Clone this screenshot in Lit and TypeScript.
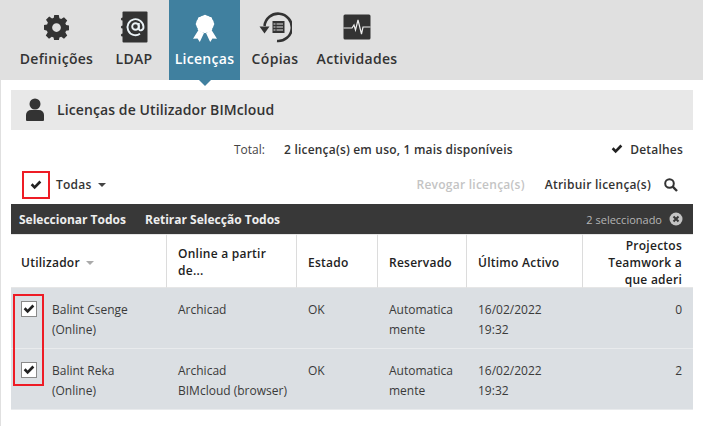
import { LitElement, html, css, svg } from "lit";
import { customElement } from "lit/decorators.js";

const check = (w: number) => html`<svg width=${w} height=${w} viewBox="0 0 14 14"><path d="M0.800 7.300 L3 5.100 L5.400 7.500 L11 1.800 L13.200 4 L5.400 11.900 Z" fill="#222"/></svg>`;

@customElement("app-root")
export class AppRoot extends LitElement {
  static styles = css`
    :host { display: block; width: 703px; height: 426px; overflow: hidden; background: #fff; font-family: "Open Sans", sans-serif; font-size: 12px; color: #333; }
    .nav { height: 80px; background: #e0e0e0; display: flex; padding-left: 14px; }
    .tab { position: relative; display: flex; flex-direction: column; align-items: center; font-size: 14px; font-weight: 600; letter-spacing: 0.3px; color: #333; box-sizing: border-box; padding-top: 11px; }
    .tab .ic { height: 32px; display: flex; align-items: center; justify-content: center; }
    .tab .lb { margin-top: 6px; line-height: 20px; white-space: nowrap; }
    .tab.active { background: #40809f; color: #fff; }
    .tab.active::after { content: ""; position: absolute; left: 50%; top: 80px; margin-left: -6px; border: 6px solid transparent; border-top-color: #40809f; border-bottom: 0; }
    .main { height: 346px; box-sizing: border-box; border-left: 1px solid #e0e0e0; padding: 10px 10px 0 10px; }
    .title { height: 40px; background: #e8e8e8; display: flex; align-items: center; padding: 0 0 1px 15px; box-sizing: border-box; font-size: 14px; font-weight: 600; letter-spacing: 0.1px; color: #333; gap: 13px; }
    .total { height: 38px; display: flex; align-items: center; font-weight: 600; letter-spacing: 0.2px; padding: 0 10px 0 223px; }
    .total .k { font-weight: 400; width: 50px; color: #444; letter-spacing: 0; }
    .total .det { margin-left: auto; display: flex; align-items: center; gap: 4px; }
    .tools { height: 36px; box-sizing: border-box; display: flex; align-items: center; font-weight: 600; letter-spacing: 0.25px; padding: 0 15px 2px 11px; }
    .tools > span, .tools .r > span { margin-bottom: 2px; }
    .allbox { width: 28px; height: 28px; box-sizing: border-box; border: 2px solid #ee1c25; display: flex; align-items: center; justify-content: center; margin-right: 6px; }
    .caret { display: inline-block; border: 4px solid transparent; border-top-color: #444; border-bottom: 0; margin-left: 6px; vertical-align: 2px; }
    .tools .r { margin-left: auto; display: flex; align-items: center; }
    .rev { color: #c4c4c4; margin-right: 20px; }
    .assign { margin-right: 13px; color: #333; }
    .dark { height: 30px; background: #383838; color: #eee; display: flex; align-items: center; font-weight: 700; padding: 0 10px 0 8px; gap: 19px; }
    .dark .sel { margin-left: auto; font-weight: 400; font-size: 11px; color: #b5b5b5; display: flex; align-items: center; gap: 7px; }
    .grid { display: grid; grid-template-columns: 156px 130px 81px 89px 116px 110px; }
    .hd { height: 54px; border-top: 1px solid #e6e6e6; border-bottom: 1px solid #e6e6e6; box-sizing: border-box; font-weight: 600; letter-spacing: 0.25px; color: #222; display: flex; align-items: center; padding: 2px 10px 0 11px; line-height: 17px; border-right: 1px solid #dcdcdc; }
    .hd:first-child { padding-left: 10px; }
    .hd:last-child { border-right: 0; justify-content: flex-end; text-align: right; padding: 2px 11px 0 11px; }
    .hd .caret { border-top-color: #aaa; margin-left: 6px; vertical-align: 2px; }
    .rowwrap { position: relative; }
    .row { background: #dbdfe3; height: 61px; display: grid; grid-template-columns: 156px 130px 81px 89px 116px 110px; border-bottom: 1px solid #e9ebed; box-sizing: border-box; line-height: 20px; color: #3a3a3a; }
    .row > div { padding: 12px 10px 0 11px; }
    .row > .user { padding: 12px 0 0 41px; position: relative; }
    .row > .num { text-align: right; padding-right: 11px; }
    .cb { position: absolute; left: 10px; top: 13px; width: 16px; height: 16px; box-sizing: border-box; background: #fff; border: 1px solid #8a8a8a; display: flex; align-items: center; justify-content: center; }
    .redbox { position: absolute; left: 2px; top: 6px; width: 31px; height: 92px; box-sizing: border-box; border: 2px solid #ee1c25; }
  `;

  private tab(label: string, icon: unknown, width: number, active = false) {
    return html`<div class="tab ${active ? "active" : ""}" style="width:${width}px"><div class="ic">${icon}</div><div class="lb">${label}</div></div>`;
  }

  render() {
    const gear = html`<svg width="25" height="25" viewBox="0 0 24 24"><path fill="#333" fill-rule="evenodd" d="M9.800 0h4.400l.6 3.200 1.700.7 2.700-1.800 3.100 3.100-1.800 2.700.7 1.700 3.200.6v4.400l-3.200.6-.7 1.700 1.800 2.700-3.100 3.100-2.700-1.800-1.700.7-.6 3.200H9.800l-.6-3.200-1.700-.7-2.700 1.800-3.100-3.100 1.800-2.700-.7-1.700L-.2 14V9.600l3.200-.6.7-1.700-1.800-2.700 3.100-3.100 2.700 1.800 1.700-.7zM12 7.800a4.200 4.200 0 1 0 0 8.400 4.200 4.200 0 0 0 0-8.400z"/></svg>`;
    const book = html`<svg width="28" height="32" viewBox="0 0 28 32"><rect x="2.500" y="0.500" width="25" height="31" rx="1" fill="#333"/><circle cx="2.500" cy="8" r="1.600" fill="#333"/><circle cx="2.500" cy="16" r="1.600" fill="#333"/><circle cx="2.500" cy="24" r="1.600" fill="#333"/><g fill="none" stroke="#eaf2f6" stroke-width="1.900"><circle cx="15.500" cy="15.500" r="3.300"/><path d="M18.800 12v5.500c0 2.800 4.700 2.500 4.700-1.500a8 8 0 1 0-3.500 6.800"/></g></svg>`;
    const angles = [0, 45, 90, 135, 180, 225, 270, 315];
    const ribbon = html`<svg width="26" height="30" viewBox="0 0 26 30"><circle cx="13" cy="12" r="8.800" fill="#fff"/>${angles.map((a) => svg`<circle cx=${13 + 7.6 * Math.cos((a * Math.PI) / 180)} cy=${12 + 7.6 * Math.sin((a * Math.PI) / 180)} r="1.700" fill="#fff"/>`)}<path fill="#fff" d="M6.500 18l5.500 3-4.200 9-2.300-3.600-4.500.4zM19.500 18l-5.500 3 4.200 9 2.300-3.600 4.500.4z"/></svg>`;
    const backup = html`<svg width="34" height="32" viewBox="0 0 34 32"><path fill="none" stroke="#333" stroke-width="2.600" d="M6.500 15A13.700 13.700 0 1 1 19 30"/><path fill="#333" d="M1.500 15.500h10l-5 7z"/><rect x="14.500" y="10" width="12" height="12" fill="#333"/><path stroke="#e0e0e0" stroke-width="1" d="M15.500 13h2M18.500 13h6.500M15.500 16h2M18.500 16h6.500M15.500 19h2M18.500 19h6.500"/></svg>`;
    const pulse = html`<svg width="28" height="26" viewBox="0 0 28 26"><rect width="27" height="25" x="0.500" y="0.500" rx="1.500" fill="#333"/><path fill="none" stroke="#eee" stroke-width="1.200" d="M0.500 14h8.500l2-3 1.500 5 2.500-10 3.500 14 1.500-7h7.500"/></svg>`;
    const person = html`<svg width="18" height="23" viewBox="0 0 18 23"><circle cx="9" cy="6" r="5.500" fill="#333"/><path fill="#333" d="M1 23a1 1 0 0 1-1-1v-5a5 5 0 0 1 5-5h8a5 5 0 0 1 5 5v5a1 1 0 0 1-1 1z"/></svg>`;
    const search = html`<svg width="14" height="14" viewBox="0 0 14 14"><circle cx="5.500" cy="5.500" r="4.300" fill="none" stroke="#333" stroke-width="2"/><path stroke="#333" stroke-width="2.400" d="M8.700 8.700l4.300 4.300"/></svg>`;
    const clear = html`<svg width="14" height="14" viewBox="0 0 14 14"><circle cx="7" cy="7" r="6.500" fill="#c4c4c4"/><path stroke="#383838" stroke-width="2" d="M4.500 4.500l5 5M9.500 4.500l-5 5"/></svg>`;
    return html`
      <div class="nav">
        ${this.tab("Definições", gear, 85)}
        ${this.tab("LDAP", book, 70)}
        ${this.tab("Licenças", ribbon, 71, true)}
        ${this.tab("Cópias", backup, 70)}
        ${this.tab("Actividades", pulse, 94)}
      </div>
      <div class="main">
        <div class="title">${person}<span>Licenças de Utilizador BIMcloud</span></div>
        <div class="total"><span class="k">Total:</span><span>2 licença(s) em uso, 1 mais disponíveis</span><span class="det">${check(12)}<span>&nbsp;Detalhes</span></span></div>
        <div class="tools">
          <div class="allbox">${check(12)}</div><span>Todas<i class="caret"></i></span>
          <div class="r"><span class="rev">Revogar licença(s)</span><span class="assign">Atribuir licença(s)</span>${search}</div>
        </div>
        <div class="dark"><span>Seleccionar Todos</span><span>Retirar Selecção Todos</span><span class="sel">2 seleccionado ${clear}</span></div>
        <div class="grid">
          <div class="hd"><span>Utilizador<i class="caret"></i></span></div>
          <div class="hd">Online a partir de...</div>
          <div class="hd">Estado</div>
          <div class="hd">Reservado</div>
          <div class="hd">Último Activo</div>
          <div class="hd">Projectos Teamwork a que aderi</div>
        </div>
        <div class="rowwrap">
          <div class="row">
            <div class="user"><span class="cb">${check(12)}</span>Balint Csenge<br />(Online)</div>
            <div>Archicad</div><div>OK</div><div>Automatica<br />mente</div><div>16/02/2022<br />19:32</div><div class="num">0</div>
          </div>
          <div class="row">
            <div class="user"><span class="cb">${check(12)}</span>Balint Reka<br />(Online)</div>
            <div>Archicad<br />BIMcloud (browser)</div><div>OK</div><div>Automatica<br />mente</div><div>16/02/2022<br />19:32</div><div class="num">2</div>
          </div>
          <div class="redbox"></div>
        </div>
      </div>
    `;
  }
}
